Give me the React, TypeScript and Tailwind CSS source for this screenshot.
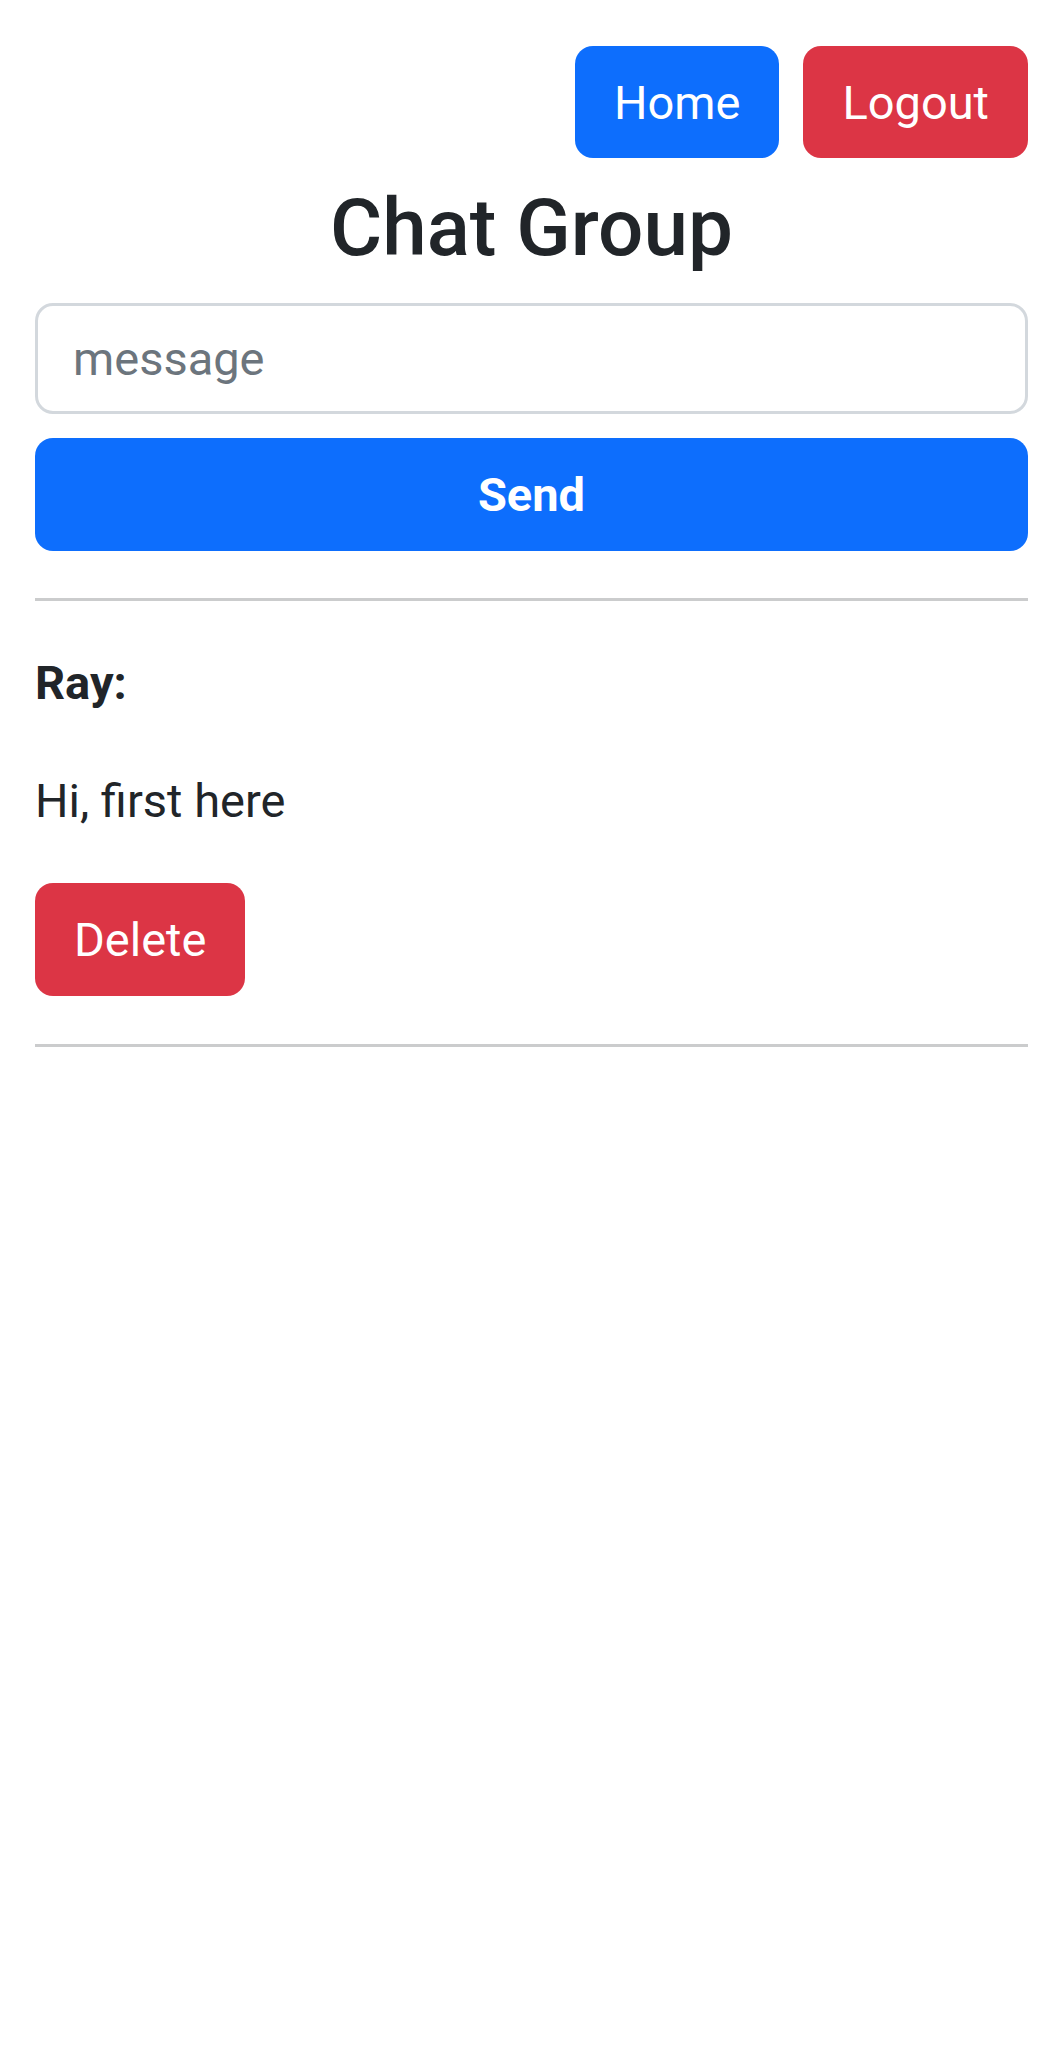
import { useState } from "react";

type Message = {
  id: number;
  user: string;
  text: string;
};

const initialMessages: Message[] = [{ id: 1, user: "Ray", text: "Hi, first here" }];

export default function App() {
  const [messages, setMessages] = useState<Message[]>(initialMessages);
  const [draft, setDraft] = useState("");

  const send = () => {
    if (!draft.trim()) return;
    setMessages((m) => [...m, { id: Date.now(), user: "Ray", text: draft }]);
    setDraft("");
  };

  return (
    <div className="min-h-screen bg-white px-[35px] pt-[46px] font-['Roboto','Liberation_Sans',sans-serif] text-[#212529]">
      <div className="flex justify-end gap-[24px]">
        <button className="h-[112px] rounded-[18px] bg-[#0d6efd] px-[39px] text-[47px] leading-none text-white">
          Home
        </button>
        <button className="h-[112px] rounded-[18px] bg-[#dc3545] px-[39px] text-[47px] leading-none text-white">
          Logout
        </button>
      </div>

      <h1 className="mt-[22px] mb-[27px] text-center text-[80px] font-medium leading-[96px]">Chat Group</h1>

      <input
        value={draft}
        onChange={(e) => setDraft(e.target.value)}
        placeholder="message"
        className="block h-[111px] w-full rounded-[18px] border-[3px] border-[#d3d8dd] px-[35px] text-[47px] outline-none placeholder:text-[#6c757d]"
      />
      <button
        onClick={send}
        className="mt-[24px] block h-[113px] w-full rounded-[18px] bg-[#0d6efd] text-[47px] font-bold leading-none text-white"
      >
        Send
      </button>

      <div className="mt-[47px] h-[3px] bg-[#cbcccd]" />

      {messages.map((m) => (
        <div key={m.id}>
          <p className="mt-[47px] text-[47px] font-bold leading-[70px]">{m.user}:</p>
          <p className="mt-[48px] text-[47px] leading-[70px]">{m.text}</p>
          <button
            onClick={() => setMessages((all) => all.filter((x) => x.id !== m.id))}
            className="mt-[47px] h-[113px] rounded-[18px] bg-[#dc3545] px-[39px] text-[47px] leading-none text-white"
          >
            Delete
          </button>
          <div className="mt-[48px] h-[3px] bg-[#cbcccd]" />
        </div>
      ))}
    </div>
  );
}
